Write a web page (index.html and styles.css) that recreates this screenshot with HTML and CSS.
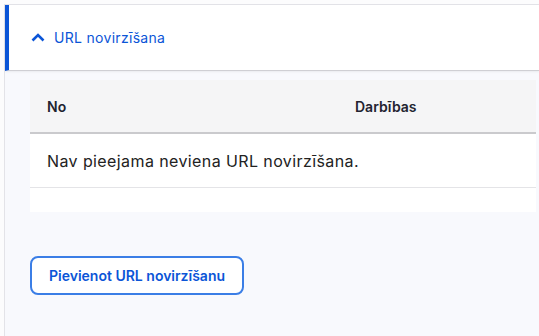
FILE: index.html
```html
<!DOCTYPE html>
<html lang="lv">
<head>
    <meta charset="UTF-8">
    <meta name="viewport" content="width=device-width, initial-scale=1.0">
    <title>URL novirzīšana</title>
    <link rel="stylesheet" href="styles.css">
</head>
<body>

<div class="details">
    <!-- Collapsible header -->
    <div class="summary">
        <svg class="chevron" width="14" height="9" viewBox="0 0 14 9">
            <path d="M1.5 7.5 L7 2 L12.5 7.5" fill="none" stroke="#0b55d7" stroke-width="2.6"/>
        </svg>
        <span class="summary-title">URL novirzīšana</span>
    </div>

    <div class="details-body">
        <div class="table-wrap">
            <table>
                <thead>
                    <tr>
                        <th class="col-path">No</th>
                        <th>Darbības</th>
                    </tr>
                </thead>
                <tbody>
                    <tr>
                        <td colspan="2">Nav pieejama neviena URL novirzīšana.</td>
                    </tr>
                </tbody>
            </table>
        </div>

        <button class="button">Pievienot URL novirzīšanu</button>
    </div>
</div>

</body>
</html>
```

FILE: styles.css
```css
body {
    margin: 0;
    background-color: #fcfcfd;
    font-family: Inter, "Noto Sans", sans-serif;
    color: #222330;
}

.details {
    margin: 4px 0 0 4px;
    border-top: 1px solid #e3e3e8;
    border-left: 1px solid #e3e3e8;
    background-color: #f8f9fd;
    height: 332px;
}

.summary {
    display: flex;
    align-items: center;
    height: 65px;
    padding-left: 22px;
    background-color: #fff;
    border-left: 4px solid #0b55d7;
    border-bottom: 1px solid #cfcfd4;
    box-shadow: 0 1px 2px rgba(0,0,0,0.06);
}

.chevron {
    margin-right: 9px;
    margin-top: -1px;
}

.summary-title {
    font-size: 14px;
    color: #0b55d7;
    letter-spacing: 0.3px;
}

.details-body {
    padding: 9px 3px 0 25px;
}

.table-wrap {
    background-color: #fff;
    padding-bottom: 24px;
}

table {
    width: 100%;
    border-collapse: collapse;
}

th {
    height: 52px;
    padding: 0 17px;
    background-color: #f5f5f6;
    border-bottom: 2px solid #cacacd;
    text-align: left;
    font-size: 14px;
    font-weight: 600;
}

th.col-path {
    width: 274px;
}

td {
    height: 53px;
    padding: 0 17px;
    border-bottom: 1px solid #e4e4e7;
    font-size: 16px;
    letter-spacing: 0.4px;
    color: #222;
}

.button {
    margin-top: 44px;
    height: 39px;
    padding: 0 17px;
    background-color: #fff;
    border: 2px solid #3b7ee6;
    border-radius: 8px;
    font-family: Inter, "Noto Sans", sans-serif;
    font-size: 14px;
    font-weight: 600;
    color: #0b55d7;
    cursor: pointer;
}
```
